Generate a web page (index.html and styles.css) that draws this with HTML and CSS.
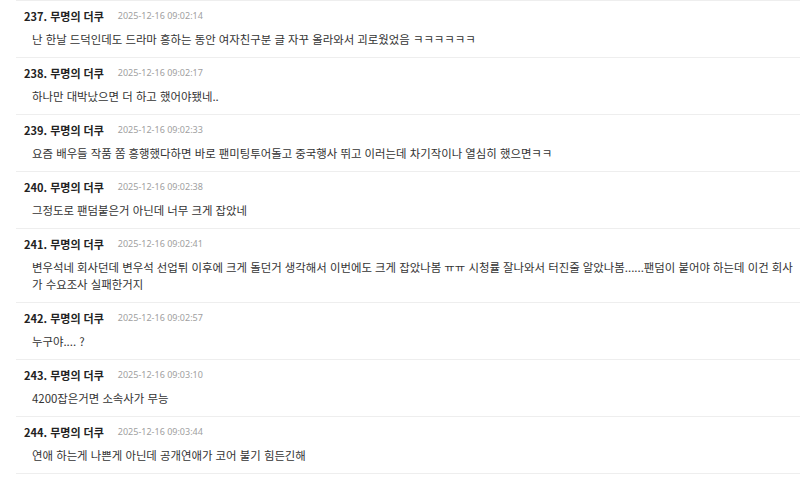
FILE: index.html
```html
<!DOCTYPE html>
<html lang="ko">
<head>
<meta charset="utf-8">
<link rel="stylesheet" href="styles.css">
</head>
<body>
<ul class="comments">
  <li class="comment">
    <div class="meta"><span class="author">237. 무명의 더쿠</span><span class="date">2025-12-16 09:02:14</span></div>
    <div class="text">난 한날 드덕인데도 드라마 흥하는 동안 여자친구분 글 자꾸 올라와서 괴로웠었음 ㅋㅋㅋㅋㅋㅋ</div>
  </li>
  <li class="comment">
    <div class="meta"><span class="author">238. 무명의 더쿠</span><span class="date">2025-12-16 09:02:17</span></div>
    <div class="text">하나만 대박났으면 더 하고 했어야됐네..</div>
  </li>
  <li class="comment">
    <div class="meta"><span class="author">239. 무명의 더쿠</span><span class="date">2025-12-16 09:02:33</span></div>
    <div class="text">요즘 배우들 작품 쫌 흥행했다하면 바로 팬미팅투어돌고 중국행사 뛰고 이러는데 차기작이나 열심히 했으면ㅋㅋ</div>
  </li>
  <li class="comment">
    <div class="meta"><span class="author">240. 무명의 더쿠</span><span class="date">2025-12-16 09:02:38</span></div>
    <div class="text">그정도로 팬덤붙은거 아닌데 너무 크게 잡았네</div>
  </li>
  <li class="comment">
    <div class="meta"><span class="author">241. 무명의 더쿠</span><span class="date">2025-12-16 09:02:41</span></div>
    <div class="text">변우석네 회사던데 변우석 선업튀 이후에 크게 돌던거 생각해서 이번에도 크게 잡았나봄 ㅠㅠ 시청률 잘나와서 터진줄 알았나봄......팬덤이 붙어야 하는데 이건 회사가 수요조사 실패한거지</div>
  </li>
  <li class="comment">
    <div class="meta"><span class="author">242. 무명의 더쿠</span><span class="date">2025-12-16 09:02:57</span></div>
    <div class="text">누구야.... ?</div>
  </li>
  <li class="comment">
    <div class="meta"><span class="author">243. 무명의 더쿠</span><span class="date">2025-12-16 09:03:10</span></div>
    <div class="text">4200잡은거면 소속사가 무능</div>
  </li>
  <li class="comment">
    <div class="meta"><span class="author">244. 무명의 더쿠</span><span class="date">2025-12-16 09:03:44</span></div>
    <div class="text">연애 하는게 나쁜게 아닌데 공개연애가 코어 불기 힘든긴해</div>
  </li>
</ul>
</body>
</html>
```
FILE: styles.css
```css
html, body {
  margin: 0;
  padding: 0;
  background: #ffffff;
}
body {
  font-family: "Noto Sans CJK KR", "Noto Sans", sans-serif;
  color: #333333;
  overflow: hidden;
}
.comments {
  list-style: none;
  margin: 0 0 0 16px;
  padding: 0;
  border-top: 1px solid #eeeeee;
}
.comment {
  padding: 6px 0 9px 8px;
  border-bottom: 1px solid #eeeeee;
}
.meta {
  display: flex;
  align-items: center;
  height: 18px;
  gap: 14px;
}
.author {
  font-size: 11px;
  font-weight: 700;
  color: #222222;
  line-height: 18px;
}
.date {
  font-family: "Noto Sans", sans-serif;
  font-size: 9px;
  color: #a0a0a0;
  line-height: 18px;
}
.text {
  margin-top: 6px;
  padding-left: 8px;
  padding-right: 0;
  font-size: 11.4px;
  line-height: 17px;
  color: #333333;
}
```
